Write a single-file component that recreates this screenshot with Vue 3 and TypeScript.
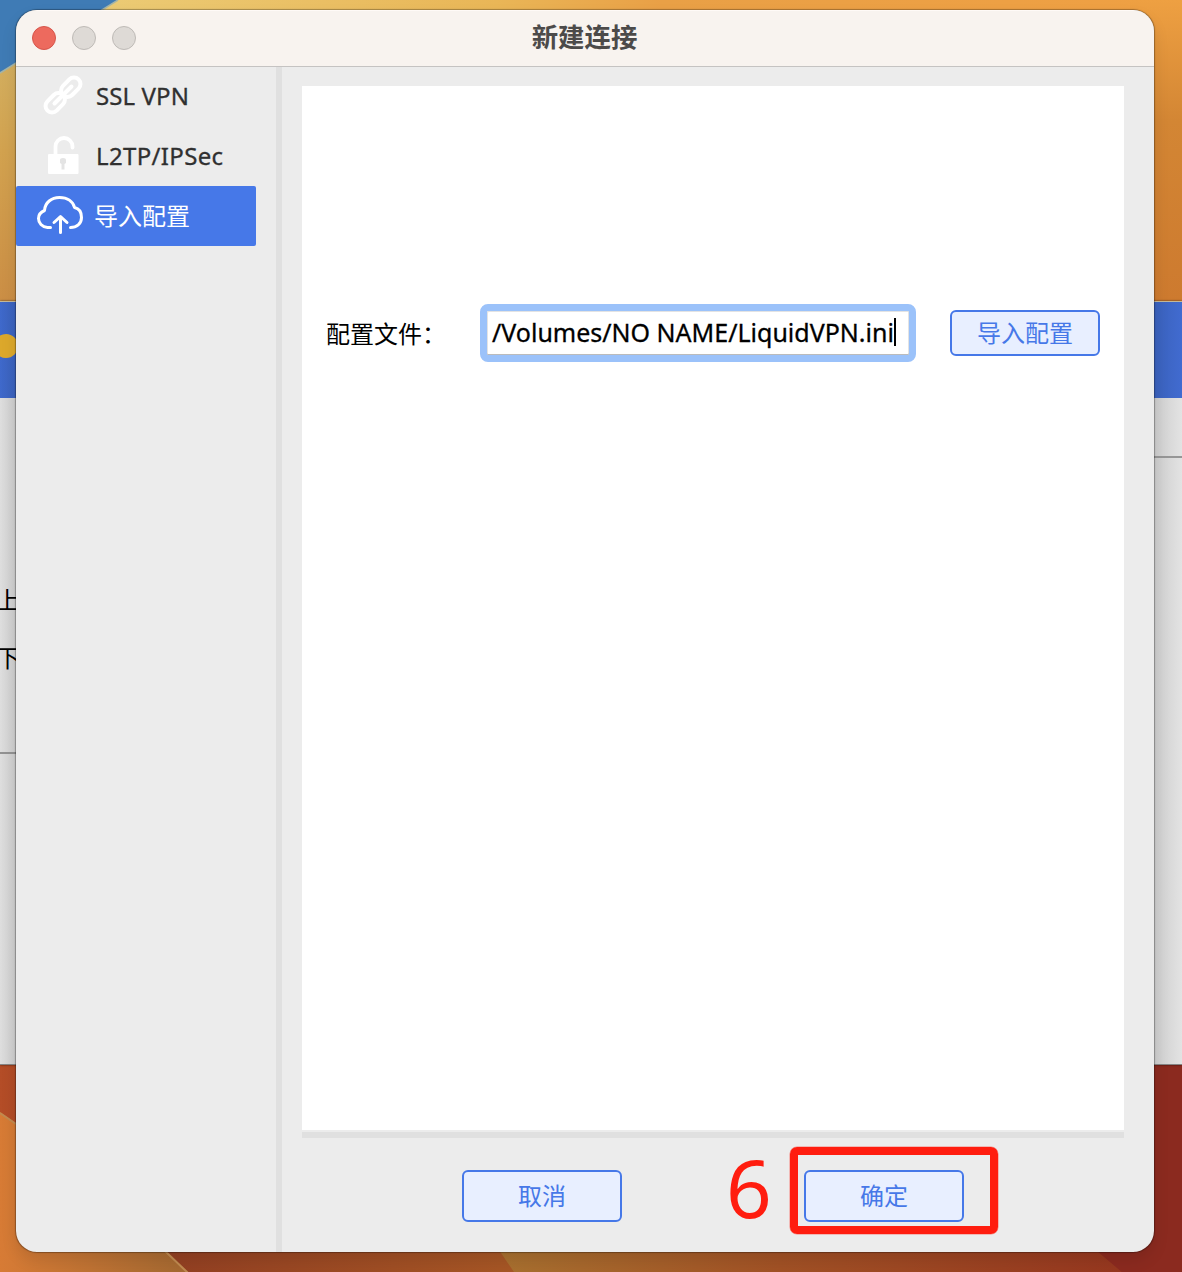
<script setup lang="ts">
import { ref } from 'vue'

type IconName = 'link' | 'lock' | 'cloud'
interface NavItem {
  icon: IconName
  label: string
}

const items: NavItem[] = [
  { icon: 'link', label: 'SSL VPN' },
  { icon: 'lock', label: 'L2TP/IPSec' },
  { icon: 'cloud', label: '导入配置' },
]
const active = ref(2)
const path = ref('/Volumes/NO NAME/LiquidVPN.ini')
</script>

<template>
  <div class="desktop">
    <svg class="wallpaper" viewBox="0 0 1182 1272" preserveAspectRatio="none" aria-hidden="true">
      <defs>
        <linearGradient id="top" x1="0" x2="1"><stop offset="0" stop-color="#ecd07c" /><stop offset=".42" stop-color="#e9b657" /><stop offset=".56" stop-color="#e9a046" /><stop offset="1" stop-color="#efa043" /></linearGradient>
        <linearGradient id="left" x1="0" y1="0" x2="0" y2="1"><stop offset="0" stop-color="#d3b76a" /><stop offset=".5" stop-color="#d2a24f" /><stop offset="1" stop-color="#cb8e45" /></linearGradient>
        <linearGradient id="right" x1="0" y1="0" x2="0" y2="1"><stop offset="0" stop-color="#eea042" /><stop offset=".4" stop-color="#d38634" /><stop offset="1" stop-color="#cd7a2f" /></linearGradient>
        <linearGradient id="rust" x1="0" x2="1"><stop offset="0" stop-color="#b44d27" /><stop offset=".16" stop-color="#933d20" /><stop offset=".42" stop-color="#9e4f23" /><stop offset=".43" stop-color="#a86d2e" /><stop offset=".62" stop-color="#a04d25" /><stop offset=".8" stop-color="#91321e" /><stop offset="1" stop-color="#902b20" /></linearGradient>
        <linearGradient id="amber" x1="0" x2="1"><stop offset="0" stop-color="#d77b35" /><stop offset="1" stop-color="#a36831" /></linearGradient>
        <linearGradient id="ember" x1="0" x2="1"><stop offset="0" stop-color="#923f22" /><stop offset="1" stop-color="#a65625" /></linearGradient>
        <linearGradient id="gold" x1="0" x2="1"><stop offset="0" stop-color="#a8702f" /><stop offset=".45" stop-color="#a15125" /><stop offset="1" stop-color="#96371f" /></linearGradient>
      </defs>
      <path d="M0 0H1182V40H0Z" fill="url(#top)" />
      <path d="M0 0H18V302H0Z" fill="url(#left)" />
      <path d="M1130 0H1182V302H1130Z" fill="url(#right)" />
      <path d="M0 0H118L0 73Z" fill="#3f7bb5" />
      <path d="M118 0L0 73" stroke="#a5b4a7" stroke-width="1.5" />
      <path d="M0 1064H1182V1272H0Z" fill="url(#rust)" />
      <path d="M165 1250H500L516 1272H188Z" fill="url(#ember)" />
      <path d="M499 1250H1096L1122 1272H514Z" fill="url(#gold)" />
      <path d="M0 1112L16 1123L166 1251L188 1272H0Z" fill="url(#amber)" />
      <path d="M0 1113L16 1124M165 1251L188 1273" stroke="#c08a50" stroke-width="2" />
      <path d="M1154 1064H1182V1272H1122L1096 1250Z" fill="#8b2a1f" />
    </svg>

    <div class="behind">
      <div class="behind-head"><span class="coin"></span></div>
      <div class="behind-row"></div>
      <div class="behind-body">
        <span class="glyph up">上</span>
        <span class="glyph down">下</span>
        <span class="rule"></span>
      </div>
    </div>

    <main class="window">
      <header class="titlebar">
        <span class="light close"></span>
        <span class="light"></span>
        <span class="light"></span>
        <h1>新建连接</h1>
      </header>
      <div class="content">
        <nav class="sidebar">
          <button
            v-for="(item, i) in items"
            :key="item.label"
            class="nav-item"
            :class="[item.icon, { active: i === active }]"
            @click="active = i"
          >
            <svg v-if="item.icon === 'link'" class="icon" viewBox="0 0 80 60">
              <g fill="none" stroke="#fff" stroke-width="4" transform="translate(47 29) rotate(-45)">
                <rect x="-22" y="-6.500" width="22" height="13" rx="6.500" />
                <rect x="0" y="-6.500" width="22" height="13" rx="6.500" />
                <path d="M-12 0H12" stroke-width="4" stroke-linecap="round" />
              </g>
            </svg>
            <svg v-else-if="item.icon === 'lock'" class="icon" viewBox="0 0 80 60">
              <path d="M39.500 30V20.500a8.500 8.500 0 0 1 17 0v1" fill="none" stroke="#fff" stroke-width="3.800" stroke-linecap="round" />
              <rect x="32" y="28" width="30.500" height="20" rx="1" fill="#fff" />
              <path d="M44 34q0-2 3-2t3 2v3l-1.500 1v5.500h-3V38l-1.500-1z" fill="#e4e4e4" />
            </svg>
            <svg v-else class="icon" viewBox="0 0 80 60">
              <g fill="none" stroke="#fff" stroke-width="3" stroke-linecap="round" stroke-linejoin="round">
                <path d="M34.500 41.500H31.500C26 41 22.500 37 22.500 32.500C22.500 28.500 25 26 28.500 24.500C29 16.500 35.500 11.500 43.500 11.500C51.500 11.500 57 15.500 58.500 21.500C63 22.500 65.500 26.500 65.500 31.500C65.500 38 60.500 41.500 54.500 41.500" />
                <path d="M44.500 46.500V31M38 36.500L44.500 30.500L51 36.500" />
              </g>
            </svg>
            <span>{{ item.label }}</span>
          </button>
        </nav>
        <section class="main">
          <div class="panel">
            <label for="config-path">配置文件：</label>
            <div class="field" id="config-path">
              <span class="path">{{ path }}</span><i class="caret"></i>
            </div>
            <button class="btn import">导入配置</button>
          </div>
          <div class="separator"></div>
          <footer class="actions">
            <button class="btn">取消</button>
            <div class="confirm">
              <span class="step">6</span>
              <span class="highlight"></span>
              <button class="btn">确定</button>
            </div>
          </footer>
        </section>
      </div>
    </main>
  </div>
</template>

<style>
body { overflow: hidden; }
</style>

<style scoped>
* { box-sizing: border-box; }
.desktop {
  position: relative;
  width: 1182px;
  height: 1272px;
  padding: 10px 28px 20px 16px;
  overflow: hidden;
  font-family: "Noto Sans", "Noto Sans CJK SC", sans-serif;
}
.wallpaper { position: absolute; inset: 0; width: 100%; height: 100%; }
.behind {
  position: absolute;
  top: 301px;
  left: 0;
  width: 100%;
  height: 764px;
  background: linear-gradient(90deg, #dedede, #ccc 16px, #ccc 1154px, #e3e3e3);
  border-top: 1px solid #c4b899;
  border-bottom: 1px solid #858585;
  box-shadow: 0 0 2px rgba(0, 0, 0, .6);
}
.behind-head {
  height: 96px;
  background: linear-gradient(90deg, #3f69cb, #3a61bb 16px, #3a61bb 1154px, #416bd0);
}
.coin {
  display: block;
  width: 24px;
  height: 24px;
  border-radius: 50%;
  background: #dca82b;
  transform: translate(-6px, 32px);
}
.behind-row { height: 60px; border-bottom: 2px solid #969696; clip-path: inset(0 0 0 50%); }
.behind-body { position: relative; height: 606px; }
.glyph {
  position: absolute;
  left: -4px;
  font: 24px/30px "Noto Sans CJK SC", sans-serif;
  color: #000;
}
.up { top: 126px; }
.down { top: 184px; }
.rule { position: absolute; top: 294px; left: 0; width: 16px; height: 2px; background: #929292; }
.window {
  position: relative;
  display: flex;
  flex-direction: column;
  height: 1242px;
  border-radius: 21px;
  overflow: hidden;
  background: #ececec;
}
.desktop::after {
  content: "";
  position: absolute;
  inset: 10px 28px 20px 16px;
  border-radius: 21px;
  box-shadow: 0 0 1px 1px rgba(0, 0, 0, .3), 0 8px 16px rgba(0, 0, 0, .1);
  pointer-events: none;
}
.titlebar {
  position: relative;
  display: flex;
  align-items: center;
  flex: 0 0 57px;
  gap: 16px;
  padding: 0 16px;
  background: #f8f3ef;
  border-bottom: 1px solid #c5c3c2;
  box-shadow: inset 0 1px #fffaf7;
}
.light { width: 24px; height: 24px; border-radius: 50%; background: #dedad6; border: 1px solid #bebab6; }
.close { background: #ed6a5e; border-color: #d5554b; }
h1 {
  position: absolute;
  left: 0;
  right: 1px;
  top: 8px;
  margin: 0;
  text-align: center;
  font: 700 26.400px/36px "Noto Sans CJK SC", sans-serif;
  color: #4c4a49;
  pointer-events: none;
}
.content { display: flex; flex: 1; min-height: 0; margin-top: -1px; }
.sidebar { width: 266px; border-right: 6px solid #e0e0e0; }
.nav-item {
  display: flex;
  align-items: center;
  width: 240px;
  height: 60px;
  padding: 0;
  border: 0;
  border-radius: 2px;
  background: transparent;
  color: #303030;
  font: 24px/36px "Noto Sans", "Noto Sans CJK SC", sans-serif;
  text-align: left;
}
.nav-item.link span, .nav-item.lock span { -webkit-text-stroke: .3px #303030; }
.nav-item.link span { letter-spacing: .1px; }
.nav-item.lock span { letter-spacing: .35px; }
.nav-item.active { background: #4678e8; color: #fff; }
.nav-item.active span { margin-left: -2px; }
.icon { width: 80px; height: 60px; flex: none; }
.main { flex: 1; padding: 20px 30px 30px 20px; }
.panel {
  display: flex;
  align-items: flex-start;
  height: 1044px;
  padding: 218px 24px 0;
  background: #fff;
}
.panel label {
  width: 154px;
  padding-top: 11px;
  font: 24px/36px "Noto Sans CJK SC", sans-serif;
  color: #000;
  white-space: nowrap;
}
.field {
  display: flex;
  align-items: center;
  width: 436px;
  height: 58px;
  padding: 0 0 3px 5px;
  border: 7px solid #9bc2fa;
  border-radius: 8px;
  background: #fff;
  box-shadow: inset 0 -1px #bbb, inset 1px 1px #e3e3e3, inset -1px 0 #e3e3e3;
  white-space: nowrap;
  font-size: 25px;
  line-height: 36px;
  color: #000;
}
.path { -webkit-text-stroke: .3px #000; }
.caret { width: 2px; height: 28px; background: #000; }
.btn {
  width: 160px;
  height: 52px;
  padding: 0 0 3px;
  border: 2px solid #4678e8;
  border-radius: 6px;
  background: #e8efff;
  color: #4678e8;
  font: 24px/36px "Noto Sans CJK SC", sans-serif;
}
.import { width: 150px; height: 46px; margin: 6px 0 0 34px; }
.separator { height: 6px; margin-top: 2px; background: #e0e0e0; }
.actions { display: flex; gap: 182px; padding: 32px 0 0 160px; }
.confirm { position: relative; }
.step {
  position: absolute;
  left: -78px;
  top: -29px;
  font: 80px/92px "Noto Sans", sans-serif;
  color: #ff1d0f;
}
.highlight {
  position: absolute;
  left: -14px;
  top: -23px;
  width: 208px;
  height: 87px;
  border: 8px solid #ff1d0f;
  border-radius: 7px;
  box-shadow: 0 0 0 .5px rgba(255, 29, 15, .5);
  pointer-events: none;
}
</style>
